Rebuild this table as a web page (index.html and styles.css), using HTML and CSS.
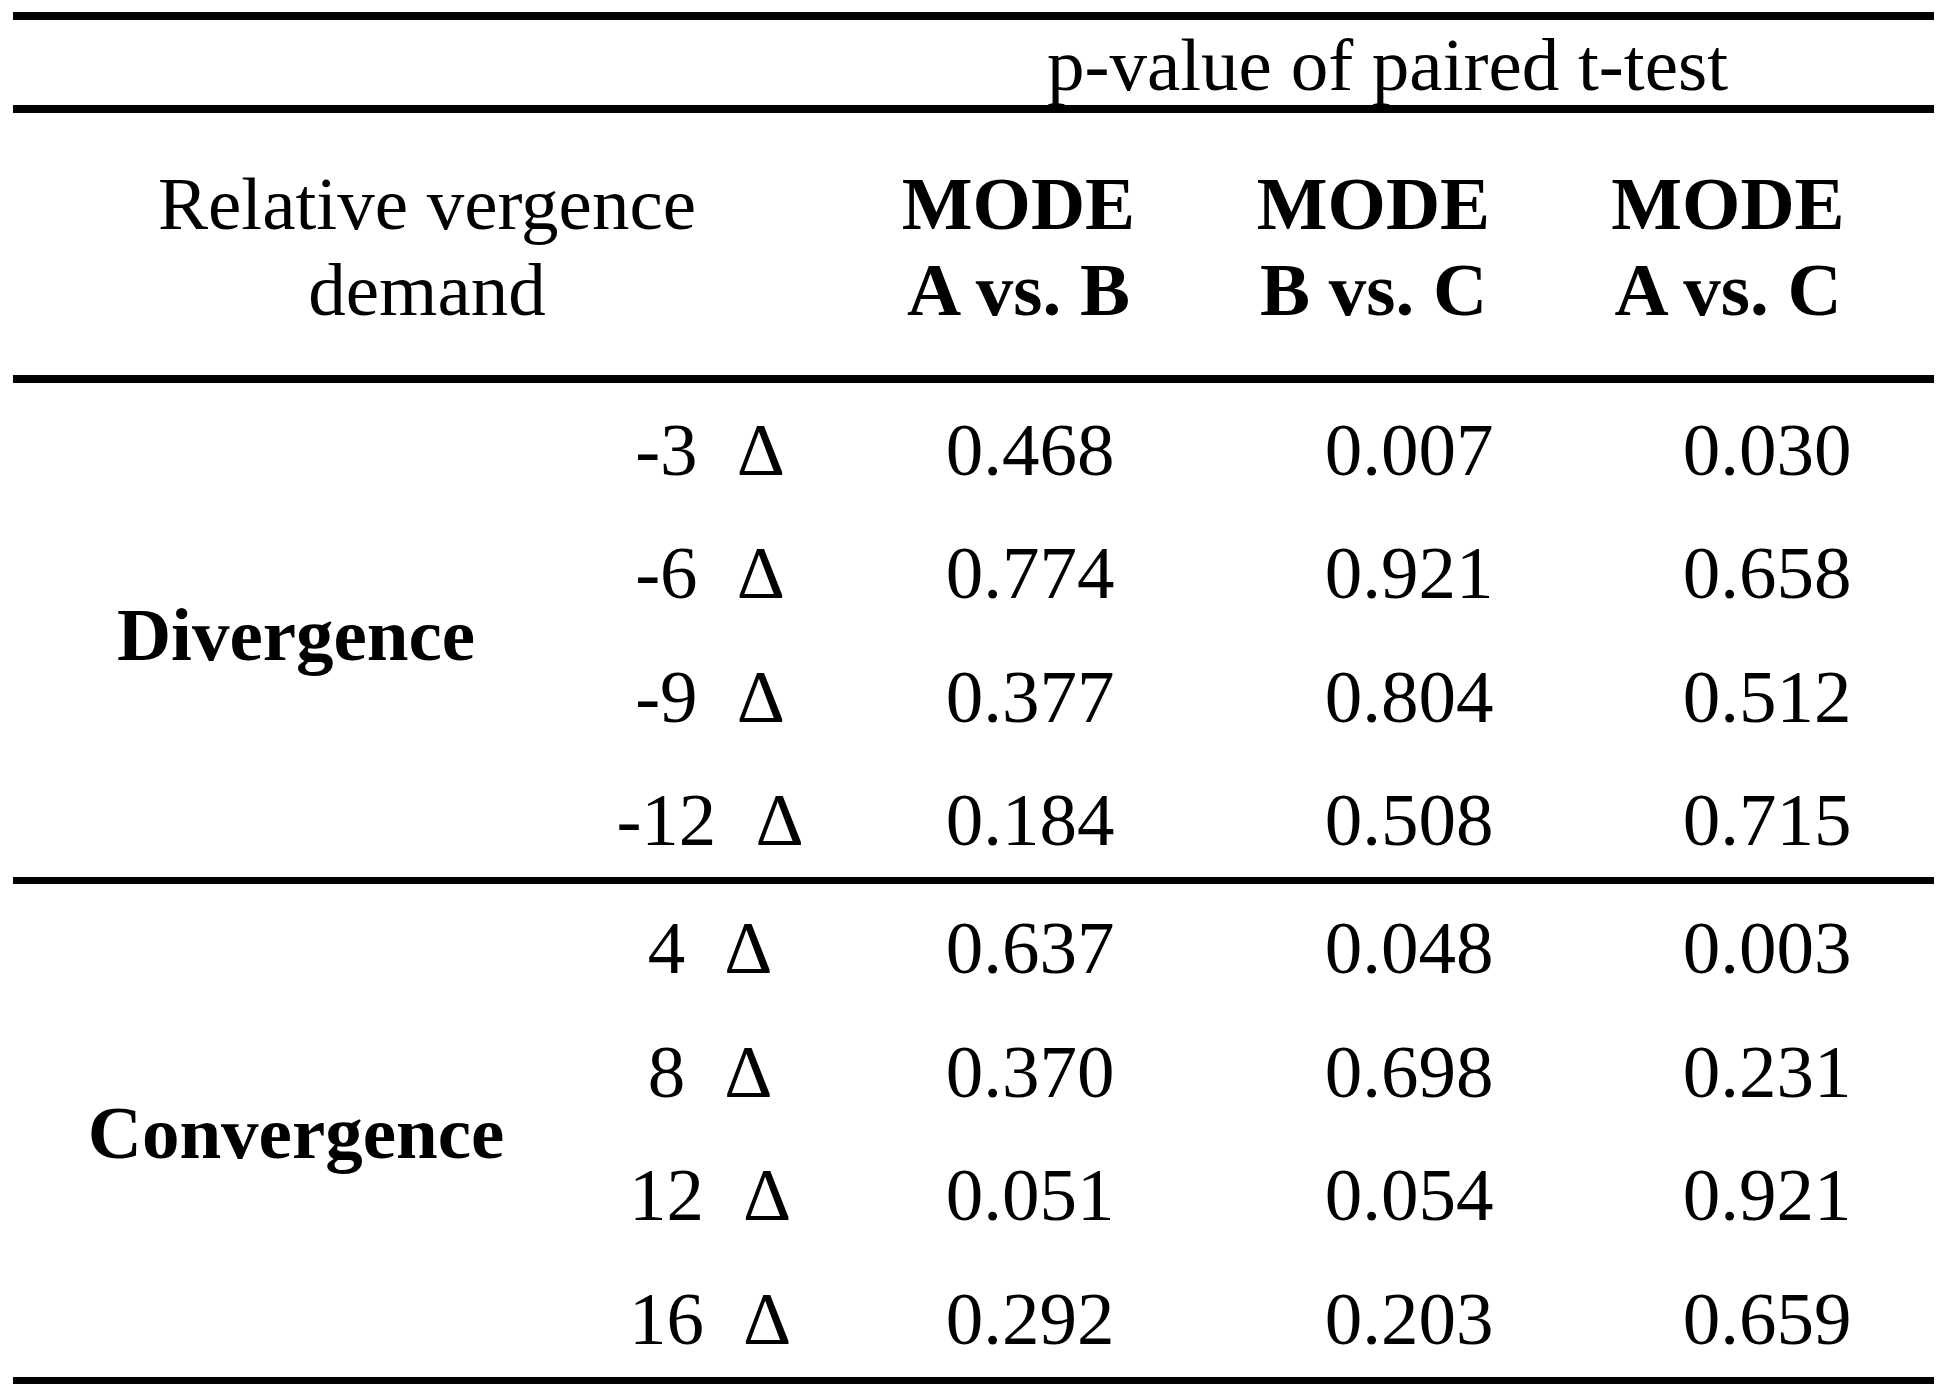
FILE: index.html
```html
<!DOCTYPE html>
<html lang="en">
<head>
<meta charset="utf-8">
<title>p-value of paired t-test</title>
<link rel="stylesheet" href="styles.css">
</head>
<body>
<div class="sheet">
  <div class="rule thick"></div>
  <div class="super grid">
    <div class="super-label">p-value of paired t-test</div>
  </div>
  <div class="rule thick"></div>
  <div class="head grid">
    <div class="h-demand">Relative vergence<br>demand</div>
    <div class="h-mode">MODE<br>A vs. B</div>
    <div class="h-mode">MODE<br>B vs. C</div>
    <div class="h-mode last">MODE<br>A vs. C</div>
  </div>
  <div class="rule thick"></div>
  <section class="group grid first-group">
    <div class="g-label">Divergence</div>
    <div class="sub">-3 <span class="delta">&Delta;</span></div><div class="v va">0.468</div><div class="v vb">0.007</div><div class="v vc">0.030</div>
    <div class="sub">-6 <span class="delta">&Delta;</span></div><div class="v va">0.774</div><div class="v vb">0.921</div><div class="v vc">0.658</div>
    <div class="sub">-9 <span class="delta">&Delta;</span></div><div class="v va">0.377</div><div class="v vb">0.804</div><div class="v vc">0.512</div>
    <div class="sub">-12 <span class="delta">&Delta;</span></div><div class="v va">0.184</div><div class="v vb">0.508</div><div class="v vc">0.715</div>
  </section>
  <div class="rule thin"></div>
  <section class="group grid second-group">
    <div class="g-label">Convergence</div>
    <div class="sub">4 <span class="delta">&Delta;</span></div><div class="v va">0.637</div><div class="v vb">0.048</div><div class="v vc">0.003</div>
    <div class="sub">8 <span class="delta">&Delta;</span></div><div class="v va">0.370</div><div class="v vb">0.698</div><div class="v vc">0.231</div>
    <div class="sub">12 <span class="delta">&Delta;</span></div><div class="v va">0.051</div><div class="v vb">0.054</div><div class="v vc">0.921</div>
    <div class="sub">16 <span class="delta">&Delta;</span></div><div class="v va">0.292</div><div class="v vb">0.203</div><div class="v vc">0.659</div>
  </section>
  <div class="rule thin"></div>
</div>
</body>
</html>
```
FILE: styles.css
```css
html, body {
  margin: 0;
  padding: 0;
  background: #ffffff;
}

body {
  font-family: "Liberation Serif", "Times New Roman", serif;
  font-size: 75px;
  color: #000000;
}

.sheet {
  width: 1921px;
  margin: 12px 0 0 13px;
}

.rule {
  background: #000000;
}
.rule.thick { height: 8px; }
.rule.thin { height: 7px; }

.grid {
  display: grid;
  grid-template-columns: 566px 262px 355px 355px 383px;
}

/* spanning header */
.super {
  padding-top: 4px;
  height: 81px;
  line-height: 81px;
}
.super-label {
  grid-column: 3 / span 3;
  text-align: center;
  white-space: nowrap;
}

/* column headings */
.head {
  padding: 48px 0 42px;
  line-height: 86px;
}
.h-demand {
  grid-column: 1 / span 2;
  text-align: center;
}
.h-mode {
  font-weight: bold;
  text-align: center;
  white-space: nowrap;
}
.h-mode.last {
  padding-right: 29px;
}

/* body groups */
.group {
  grid-template-rows: repeat(4, 86px);
  line-height: 86px;
}
.first-group {
  padding: 24px 0 14px;
  row-gap: 37.3px;
}
.second-group {
  padding: 21px 0 15px;
  row-gap: 37.7px;
}

.g-label {
  grid-column: 1;
  grid-row: 1 / span 4;
  align-self: center;
  font-weight: bold;
  text-align: center;
}

.sub {
  grid-column: 2;
  text-align: center;
  white-space: nowrap;
}
.delta {
  margin-left: 0.27em;
}

.v {
  text-align: center;
}
.va { grid-column: 3; padding-left: 23px; }
.vb { grid-column: 4; padding-left: 71px; }
.vc { grid-column: 5; padding-left: 49px; }
```
